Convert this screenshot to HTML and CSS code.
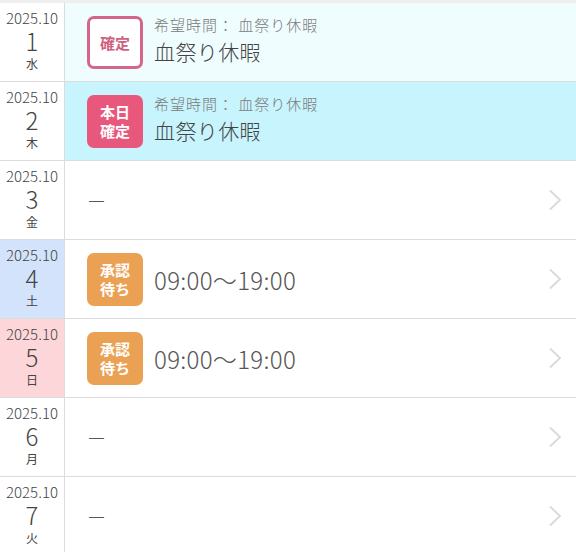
FILE: index.html
```html
<!DOCTYPE html>
<html lang="ja">
<head>
<meta charset="utf-8">
<link rel="stylesheet" href="styles.css">
</head>
<body>
<div class="list">
  <div class="row">
    <div class="date"><span class="ym">2025.10</span><span class="d">1</span><span class="w">水</span></div>
    <div class="body today-pale">
      <div class="badge outline">確定</div>
      <div class="info"><div class="sub">希望時間： 血祭り休暇</div><div class="main">血祭り休暇</div></div>
    </div>
  </div>
  <div class="row">
    <div class="date"><span class="ym">2025.10</span><span class="d">2</span><span class="w">木</span></div>
    <div class="body today">
      <div class="badge pink">本日<br>確定</div>
      <div class="info"><div class="sub">希望時間： 血祭り休暇</div><div class="main">血祭り休暇</div></div>
    </div>
  </div>
  <div class="row">
    <div class="date"><span class="ym">2025.10</span><span class="d">3</span><span class="w">金</span></div>
    <div class="body">
      <div class="dash">ー</div>
      <span class="chev"><svg width="14" height="22" viewBox="0 0 14 22"><path d="M2 1.5 L12 11 L2 20.5" fill="none" stroke="#d9d9d9" stroke-width="1.8"/></svg></span>
    </div>
  </div>
  <div class="row">
    <div class="date sat"><span class="ym">2025.10</span><span class="d">4</span><span class="w">土</span></div>
    <div class="body">
      <div class="badge orange">承認<br>待ち</div>
      <div class="time">09:00〜19:00</div>
      <span class="chev"><svg width="14" height="22" viewBox="0 0 14 22"><path d="M2 1.5 L12 11 L2 20.5" fill="none" stroke="#d9d9d9" stroke-width="1.8"/></svg></span>
    </div>
  </div>
  <div class="row">
    <div class="date sun"><span class="ym">2025.10</span><span class="d">5</span><span class="w">日</span></div>
    <div class="body">
      <div class="badge orange">承認<br>待ち</div>
      <div class="time">09:00〜19:00</div>
      <span class="chev"><svg width="14" height="22" viewBox="0 0 14 22"><path d="M2 1.5 L12 11 L2 20.5" fill="none" stroke="#d9d9d9" stroke-width="1.8"/></svg></span>
    </div>
  </div>
  <div class="row">
    <div class="date"><span class="ym">2025.10</span><span class="d">6</span><span class="w">月</span></div>
    <div class="body">
      <div class="dash">ー</div>
      <span class="chev"><svg width="14" height="22" viewBox="0 0 14 22"><path d="M2 1.5 L12 11 L2 20.5" fill="none" stroke="#d9d9d9" stroke-width="1.8"/></svg></span>
    </div>
  </div>
  <div class="row">
    <div class="date"><span class="ym">2025.10</span><span class="d">7</span><span class="w">火</span></div>
    <div class="body">
      <div class="dash">ー</div>
      <span class="chev"><svg width="14" height="22" viewBox="0 0 14 22"><path d="M2 1.5 L12 11 L2 20.5" fill="none" stroke="#d9d9d9" stroke-width="1.8"/></svg></span>
    </div>
  </div>
</div>
</body>
</html>
```
FILE: styles.css
```css
html, body {
  margin: 0;
  padding: 0;
  background: #fff;
  overflow: hidden;
}
body {
  font-family: "Noto Sans CJK JP", "Noto Sans", sans-serif;
  color: #444;
}
.list {
  border-top: 3px solid #eeeeef;
}
.row {
  display: flex;
  height: 78px;
  border-bottom: 1px solid #dcdcdc;
}
.date {
  width: 65px;
  flex: none;
  border-right: 1px solid #dcdcdc;
  display: flex;
  flex-direction: column;
  align-items: center;
  background: #fff;
  color: #444;
  padding-top: 6px;
  box-sizing: border-box;
}
.date.sat { background: #d3e3fb; }
.date.sun { background: #fdd6da; }
.ym {
  font-size: 15px;
  line-height: 18px;
  font-weight: 300;
}
.d {
  font-size: 24px;
  line-height: 26px;
  margin-top: 1px;
  font-weight: 300;
}
.w {
  font-size: 12px;
  line-height: 16px;
  margin-top: 2px;
}
.body {
  flex: 1;
  display: flex;
  align-items: center;
  padding-left: 22px;
  position: relative;
  background: #fff;
}
.body.today-pale { background: #f0fdff; }
.body.today { background: #c7f4fd; }
.badge {
  width: 56px;
  height: 53px;
  box-sizing: border-box;
  border-radius: 7px;
  display: flex;
  align-items: center;
  justify-content: center;
  text-align: center;
  font-size: 15px;
  line-height: 19px;
  font-weight: bold;
  flex: none;
}
.badge.outline {
  border: 3px solid #d4668a;
  background: #fff;
  color: #cf5f80;
}
.badge.pink {
  background: #e8587d;
  color: #fff;
}
.badge.orange {
  background: #eba154;
  color: #fff;
}
.info {
  margin-left: 11px;
  display: flex;
  flex-direction: column;
  margin-top: -3px;
}
.sub {
  font-size: 15px;
  line-height: 18px;
  letter-spacing: 1px;
  color: #7a7a7a;
  font-weight: 300;
}
.main {
  font-size: 21px;
  line-height: 28px;
  letter-spacing: 0.4px;
  color: #444;
  margin-top: 3px;
  font-weight: 300;
}
.time {
  margin-left: 11px;
  font-size: 24px;
  color: #555;
  letter-spacing: 0.3px;
  font-weight: 300;
}
.dash {
  font-size: 19px;
  color: #555;
  font-weight: 300;
}
.chev {
  position: absolute;
  right: 14px;
  top: 28px;
  display: block;
  line-height: 0;
}
```
